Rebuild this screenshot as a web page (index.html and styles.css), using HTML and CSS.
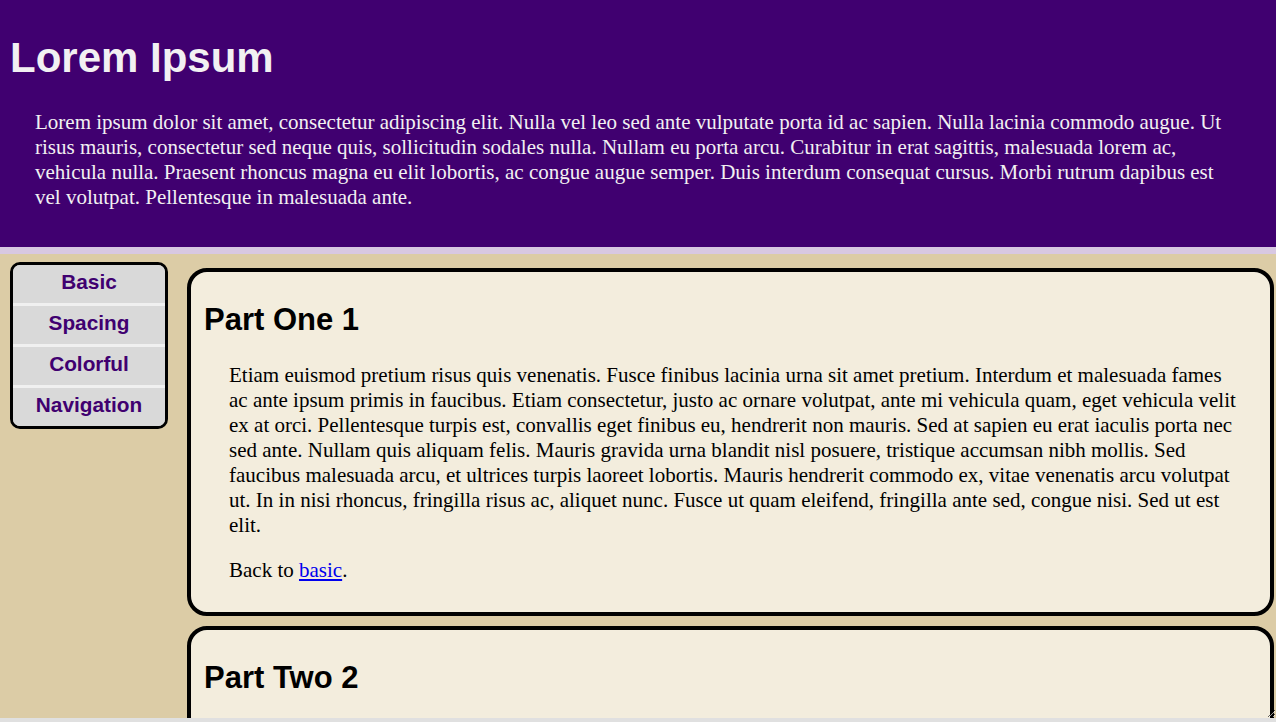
FILE: index.html
```html
<!DOCTYPE html>
<html lang="en">
<head>
  <meta charset="UTF-8">
  <meta name="viewport" content="width=device-width, initial-scale=1">
  <title>Lorem Ipsum</title>
  <link rel="stylesheet" href="styles.css">
</head>
<body>
  <div class="page">
    <header class="masthead">
      <h1>Lorem Ipsum</h1>
      <p>Lorem ipsum dolor sit amet, consectetur adipiscing elit. Nulla vel leo sed ante vulputate porta id ac sapien. Nulla lacinia commodo augue. Ut risus mauris, consectetur sed neque quis, sollicitudin sodales nulla. Nullam eu porta arcu. Curabitur in erat sagittis, malesuada lorem ac, vehicula nulla. Praesent rhoncus magna eu elit lobortis, ac congue augue semper. Duis interdum consequat cursus. Morbi rutrum dapibus est vel volutpat. Pellentesque in malesuada ante.</p>
    </header>

    <div class="layout">
      <nav class="menu">
        <a href="#basic">Basic</a>
        <a href="#spacing">Spacing</a>
        <a href="#colorful">Colorful</a>
        <a href="#navigation">Navigation</a>
      </nav>

      <main class="parts">
        <section class="part" id="one">
          <h2>Part One 1</h2>
          <p>Etiam euismod pretium risus quis venenatis. Fusce finibus lacinia urna sit amet pretium. Interdum et malesuada fames ac ante ipsum primis in faucibus. Etiam consectetur, justo ac ornare volutpat, ante mi vehicula quam, eget vehicula velit ex at orci. Pellentesque turpis est, convallis eget finibus eu, hendrerit non mauris. Sed at sapien eu erat iaculis porta nec sed ante. Nullam quis aliquam felis. Mauris gravida urna blandit nisl posuere, tristique accumsan nibh mollis. Sed faucibus malesuada arcu, et ultrices turpis laoreet lobortis. Mauris hendrerit commodo ex, vitae venenatis arcu volutpat ut. In in nisi rhoncus, fringilla risus ac, aliquet nunc. Fusce ut quam eleifend, fringilla ante sed, congue nisi. Sed ut est elit.</p>
          <p>Back to <a href="#basic">basic</a>.</p>
        </section>

        <section class="part" id="two">
          <h2>Part Two 2</h2>
          <p>Vestibulum ante ipsum primis in faucibus orci luctus et ultrices posuere cubilia curae; Donec vitae lacus nec lorem tempor ultrices. Integer sit amet nunc at justo aliquet sodales.</p>
          <p>Back to <a href="#basic">basic</a>.</p>
        </section>
      </main>
    </div>
  </div>
  <div class="bottom-bar"></div>
</body>
</html>
```

FILE: styles.css
```css
*{
  box-sizing: border-box;
}

html, body{
  margin: 0;
  padding: 0;
  height: 100%;
  overflow: hidden;
}

body{
  font-family: "Liberation Serif", "Times New Roman", serif;
  font-size: 21px;
  line-height: 25px;
  background: #e0e0e0;
}

.page{
  height: 718px;
  overflow: hidden;
  resize: both;
  background: #dccca6;
}

.bottom-bar{
  height: 4px;
  background: #e0e0e0;
}

/* header */
.masthead{
  background: #400070;
  color: #f2f0f2;
  padding: 6px 10px 17px;
  border-bottom: 7px solid #d8c8e2;
}

.masthead h1{
  font-family: "Liberation Sans", Arial, sans-serif;
  font-size: 42px;
  line-height: 48px;
  margin: 28px 0;
}

.masthead p{
  margin: 20px 25px;
}

/* body */
.layout{
  display: flex;
  align-items: flex-start;
}

.menu{
  flex: 0 0 158px;
  margin: 8px 0 0 10px;
  border: 3px solid #000;
  border-radius: 10px;
  overflow: hidden;
  background: #f0f0f0;
  display: flex;
  flex-direction: column;
  gap: 3px;
}

.menu a{
  display: block;
  height: 38px;
  line-height: 33px;
  background: #d9d9d9;
  color: #400070;
  font-family: "Liberation Sans", Arial, sans-serif;
  font-weight: bold;
  font-size: 20.8px;
  text-align: center;
  text-decoration: none;
}

.parts{
  flex: 1;
  margin: 14px 2px 0 19px;
  display: flex;
  flex-direction: column;
  gap: 10px;
}

.part{
  background: #f3eddd;
  border: 4px solid #000;
  border-radius: 20px;
  padding: 5px 8px 9px 13px;
}

.part h2{
  font-family: "Liberation Sans", Arial, sans-serif;
  font-size: 31px;
  line-height: 36px;
  margin: 25px 0;
}

.part p{
  margin: 20px 25px;
}

.part a{
  color: #0000ee;
}
```
